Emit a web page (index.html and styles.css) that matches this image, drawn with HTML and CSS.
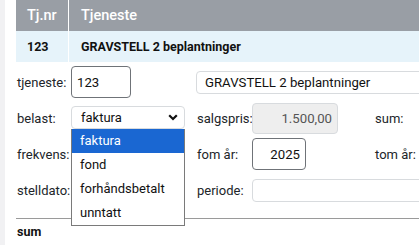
FILE: index.html
```html
<!DOCTYPE html>
<html>
<head>
<meta charset="utf-8">
<link rel="stylesheet" href="styles.css">
</head>
<body>
<div class="page">
  <table class="tbl">
    <thead>
      <tr><th class="c1">Tj.nr</th><th class="c2">Tjeneste</th></tr>
    </thead>
    <tbody>
      <tr><td class="c1">123</td><td class="c2">GRAVSTELL 2 beplantninger</td></tr>
    </tbody>
  </table>

  <div class="form">
    <label class="lbl l1">tjeneste:</label>
    <div class="cell c2"><div class="inp dark w60">123</div></div>
    <div class="cell span3"><div class="inp light tall-s full">GRAVSTELL 2 beplantninger</div></div>

    <label class="lbl l1">belast:</label>
    <div class="cell c2 sel-wrap">
      <div class="sel">
        <span>faktura</span>
        <svg class="chev" width="10" height="7" viewBox="0 0 10 7"><polyline points="1.2,1.2 5,5 8.8,1.2" fill="none" stroke="#111" stroke-width="2.2"/></svg>
      </div>
      <ul class="list">
        <li class="on">faktura</li>
        <li>fond</li>
        <li>forhåndsbetalt</li>
        <li>unntatt</li>
      </ul>
    </div>
    <label class="lbl l3">salgspris:</label>
    <div class="cell"><div class="inp dis w86 right">1.500,00</div></div>
    <label class="lbl l5">sum:</label>

    <label class="lbl l1">frekvens:</label>
    <div class="cell c2"></div>
    <label class="lbl l3">fom år:</label>
    <div class="cell"><div class="inp dark w54 right">2025</div></div>
    <label class="lbl l5">tom år:</label>

    <label class="lbl l1">stelldato:</label>
    <div class="cell c2"></div>
    <label class="lbl l3">periode:</label>
    <div class="cell span2"><div class="inp light tall-s full"></div></div>
  </div>

  <div class="sumrow">sum</div>
</div>
</body>
</html>
```
FILE: styles.css
```css
html, body {
  margin: 0;
  padding: 0;
  background: #fff;
  overflow: hidden;
}
body {
  width: 419px;
  height: 245px;
  font-family: Roboto, "Liberation Sans", Arial, sans-serif;
  font-size: 13px;
  color: #212529;
}
.page {
  box-sizing: border-box;
  height: 245px;
  border-left: 5px solid #f1f1f3;
  padding-left: 11px;
  width: 419px;
  overflow: hidden;
}
.tbl {
  border-collapse: collapse;
  width: 544px;
}
.tbl th, .tbl td {
  text-align: left;
  padding: 0 0 0 11px;
  height: 31px;
}
.tbl th {
  background: #999ea5;
  color: #fff;
  font-weight: 500;
  font-size: 14.5px;
}
.tbl td {
  background: #e6f3fa;
  font-weight: 700;
  font-size: 12.5px;
  color: #111;
}
.tbl .c1 {
  width: 41px;
  border-right: 1px solid #fff;
}
.tbl .c2 {
  padding-left: 12px;
}

.form {
  display: grid;
  grid-template-columns: 55px 125px 56px 122px 180px;
  grid-auto-rows: 36px;
  margin-top: 2px;
  align-items: center;
}
.lbl {
  white-space: nowrap;
  font-size: 13px;
}
.l1 { padding-left: 1px; grid-column: 1; }
.l3 { padding-left: 1px; grid-column: 3; }
.l5 { padding-left: 1px; grid-column: 5; }
.cell {
  display: flex;
  align-items: center;
  height: 100%;
}
.span3 { grid-column: 3 / span 3; }
.span2 { grid-column: 4 / span 2; }

.inp {
  box-sizing: border-box;
  height: 32px;
  border-radius: 4px;
  padding: 0 5px;
  display: flex;
  align-items: center;
  font-size: 13.2px;
  color: #111;
  white-space: nowrap;
}
.dark { border: 1px solid #6f7378; }
.light { border: 1px solid #d8dbde; }
.dis { border: 1px solid #d8dbde; background: #eeeeee; color: #555; height: 31px; }
.tall-s { height: 23px; }
.full { width: 100%; padding-left: 8px; }
.w60 { width: 60px; }
.w86 { width: 86px; }
.w54 { width: 54px; }
.right { justify-content: flex-end; }

.sel-wrap { position: relative; }
.sel {
  box-sizing: border-box;
  width: 114px;
  height: 23px;
  border: 1px solid #d8dbde;
  border-radius: 4px;
  padding: 0 0 0 9px;
  display: flex;
  align-items: center;
  justify-content: space-between;
  font-size: 13px;
  color: #111;
  margin-top: -1px;
}
.chev { margin-right: 6px; }
.list {
  position: absolute;
  left: 0;
  top: 29px;
  width: 114px;
  box-sizing: border-box;
  margin: 0;
  padding: 0;
  list-style: none;
  border: 1px solid #7a7a7a;
  border-top: none;
  background: #fff;
  z-index: 5;
}
.list li {
  height: 24px;
  line-height: 24px;
  padding-left: 8px;
  font-size: 13px;
  color: #111;
}
.list li.on {
  background: #1a67d2;
  color: #fff;
}

.sumrow {
  border-top: 1px solid #9a9a9a;
  margin-top: 10px;
  padding: 5px 0 0 1px;
  font-weight: 700;
  font-size: 12.5px;
  color: #111;
}
```
